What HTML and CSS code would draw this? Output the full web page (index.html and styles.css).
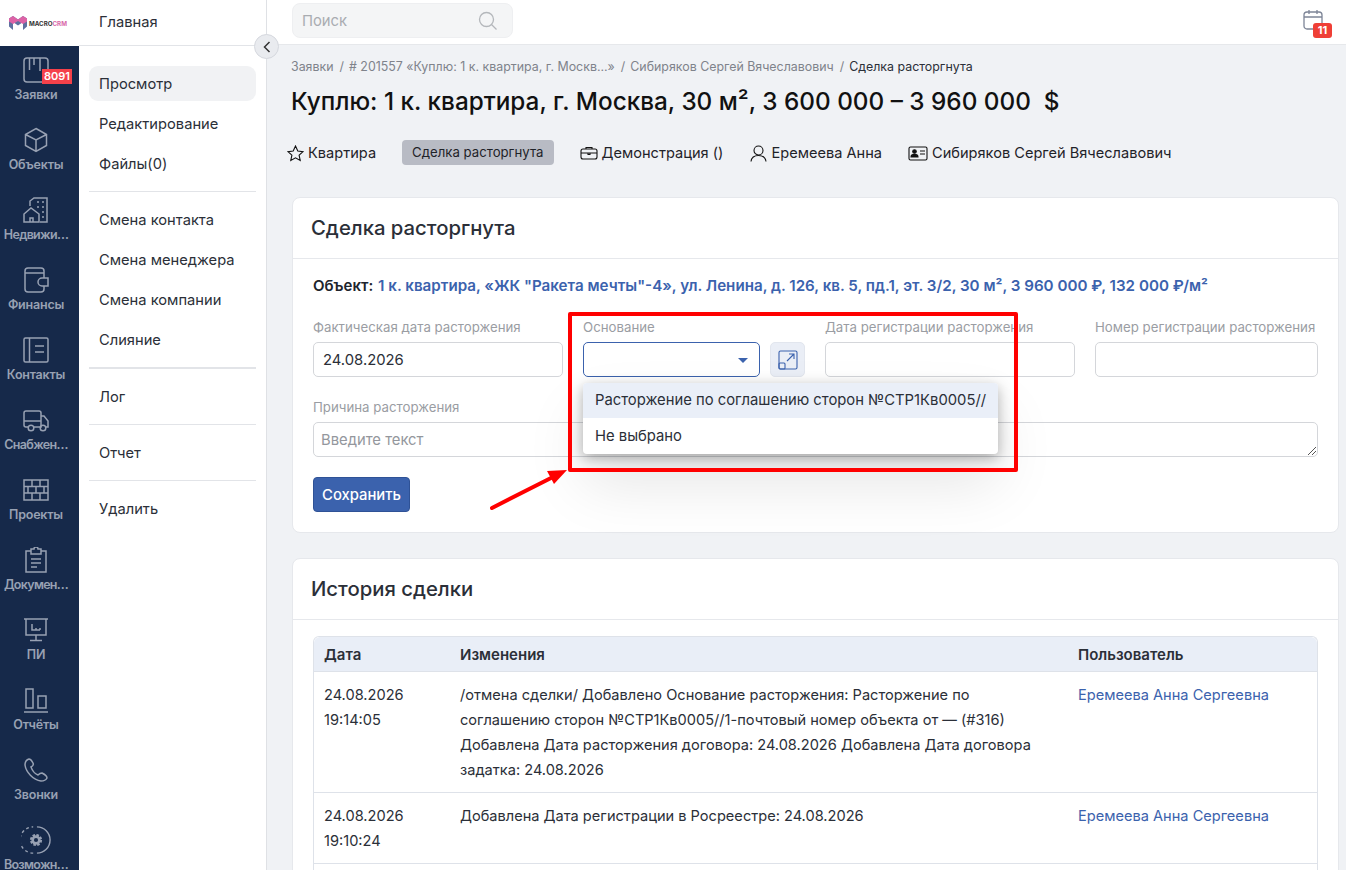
FILE: index.html
```html
<!DOCTYPE html>
<html lang="ru">
<head>
  <meta charset="UTF-8" />
  <title>MacroCRM</title>
  <link rel="stylesheet" href="styles.css">
</head>
<body>
  <div class="app">
    <aside class="rail">
      <div class="logo">
        <svg width="18" height="14" viewBox="0 0 18 14"><path d="M0 2.500L4 0l5 3.500L14 0l4 2.500v8L14 14V6L9 9.500 4 6v8l-4-3.500z" fill="#5f70a0"/><path d="M0 2.500L4 0l5 3.500L14 0l4 2.500v3L14 8 9 5 4 8 0 5.500z" fill="#dd62a6"/></svg>
        <span class="logo-text">MACRO<span class="logo-crm">CRM</span></span>
      </div>
      <a class="rail-item">
        <svg class="rail-icon" viewBox="0 0 26 26"><rect x="1" y="1" width="24" height="24" rx="3"/><path d="M6.500 1v12M11 1v7M17 1v13"/></svg>
        <span>Заявки</span><b class="rail-badge">8091</b>
      </a>
      <a class="rail-item">
        <svg class="rail-icon" viewBox="0 0 26 26"><path d="M13 1.500l10.500 6v11L13 24.500l-10.500-6v-11zM2.500 7.500L13 13l10.500-5.500M13 13v11.500"/></svg>
        <span>Объекты</span>
      </a>
      <a class="rail-item">
        <svg class="rail-icon" viewBox="0 0 26 26"><path d="M7 9V4l4-3h13v24h-7M1 25v-8l7-6 8 6v8zM7 25v-4h3v4M14 5h2M19 5h2M14 10h2M19 10h2M19 15h2M19 20h2"/></svg>
        <span class="rail-cut">Недвижи…</span>
      </a>
      <a class="rail-item">
        <svg class="rail-icon" viewBox="0 0 26 26"><path d="M21 11V4a3 3 0 0 0-3-3H5a3 3 0 0 0-3 3v18a3 3 0 0 0 3 3h13a3 3 0 0 0 3-3v-3M2 6h19"/><path d="M25 11h-6a4 4 0 0 0 0 8h6z"/></svg>
        <span>Финансы</span>
      </a>
      <a class="rail-item">
        <svg class="rail-icon" viewBox="0 0 26 26"><rect x="1" y="1" width="24" height="24" rx="1.500"/><path d="M6.500 1v24M12 9h9M12 15h9"/></svg>
        <span>Контакты</span>
      </a>
      <a class="rail-item">
        <svg class="rail-icon" viewBox="0 0 26 26"><path d="M5 20H3a2 2 0 0 1-2-2V6a2 2 0 0 1 2-2h13a2 2 0 0 1 2 2v14h-7M18 9h3l4 5v6h-2M1 14h17"/><circle cx="8" cy="21" r="2.800"/><circle cx="20" cy="21" r="2.800"/></svg>
        <span class="rail-cut">Снабжен…</span>
      </a>
      <a class="rail-item">
        <svg class="rail-icon" viewBox="0 0 26 26"><path d="M1 3h24v20H1zM1 9.500h24M1 16h24M9 3v6.500M17 3v6.500M5 9.500V16M13 9.500V16M21 9.500V16M9 16v7M17 16v7"/></svg>
        <span>Проекты</span>
      </a>
      <a class="rail-item">
        <svg class="rail-icon" viewBox="0 0 26 26"><path d="M8 4H3v21h20V4h-5M8 2h3a2 2 0 0 1 4 0h3v5H8zM8 12h10M8 16h10M8 20h6"/></svg>
        <span class="rail-cut">Докумен…</span>
      </a>
      <a class="rail-item">
        <svg class="rail-icon" viewBox="0 0 26 26"><path d="M1 2h24M3 2v16h20V2M13 18v5M7 23.500h12M9 7v6h8M13 11v2M17 11v2"/></svg>
        <span>ПИ</span>
      </a>
      <a class="rail-item">
        <svg class="rail-icon" viewBox="0 0 26 26"><path d="M1 25h24M3 2h7v19H3zM15 9h8v12h-8z"/></svg>
        <span>Отчёты</span>
      </a>
      <a class="rail-item">
        <svg class="rail-icon" viewBox="0 0 26 26"><path d="M6 2C3 3 2 5 2 8c1 7 8 15 16 16 3 0 5-1 6-3 0-2-3-4-5-5-2 0-3 1-4 2-3-1-6-5-7-8 2-1 3-2 2-4C9 4 8 2 6 2z"/></svg>
        <span>Звонки</span>
      </a>
      <a class="rail-item">
        <svg class="rail-icon rail-icon-big" viewBox="0 0 32 32"><path d="M17 2a14 14 0 0 1 0 28"/><path d="M13 30A14 14 0 0 1 13 2" stroke-dasharray="3 3"/><circle cx="16" cy="16" r="5" fill="#98a1b3" stroke-width="3" stroke-dasharray="2.500 1.400"/><circle cx="16" cy="16" r="2.200" fill="#16294a" stroke="none"/></svg>
        <span class="rail-cut">Возможн…</span>
      </a>
    </aside>

    <nav class="side">
      <div class="side-top">Главная</div>
      <button class="side-toggle"><svg width="8" height="12" viewBox="0 0 8 12"><path d="M6.500 1L1.500 6l5 5" fill="none" stroke="#333" stroke-width="1.500"/></svg></button>
      <div class="side-list">
        <a class="side-link side-link-active">Просмотр</a>
        <a class="side-link">Редактирование</a>
        <a class="side-link">Файлы(0)</a>
        <hr class="side-sep">
        <a class="side-link">Смена контакта</a>
        <a class="side-link">Смена менеджера</a>
        <a class="side-link">Смена компании</a>
        <a class="side-link">Слияние</a>
        <hr class="side-sep side-sep-thick">
        <a class="side-link">Лог</a>
        <hr class="side-sep">
        <a class="side-link">Отчет</a>
        <hr class="side-sep">
        <a class="side-link">Удалить</a>
      </div>
    </nav>

    <div class="main">
      <header class="topbar">
        <div class="search">
          <span>Поиск</span>
          <svg width="20" height="20" viewBox="0 0 20 20" fill="none" stroke="#b4b7bb" stroke-width="1.300"><circle cx="8.500" cy="8.500" r="7"/><path d="M13.500 13.500l5 5"/></svg>
        </div>
        <div class="cal">
          <svg width="20" height="22" viewBox="0 0 20 22" fill="none" stroke="#7d8597" stroke-width="1.300"><rect x="1" y="3" width="18" height="17" rx="3"/><path d="M1 8h18M6 1v4M14 1v4"/></svg>
          <b class="cal-badge">11</b>
        </div>
      </header>

      <div class="content">
        <div class="crumbs">
          <span>Заявки</span><i>/</i><span># 201557 «Куплю: 1 к. квартира, г. Москв...»</span><i>/</i><span>Сибиряков Сергей Вячеславович</span><i>/</i><span class="crumb-now">Сделка расторгнута</span>
        </div>
        <h1 class="title">Куплю: 1 к. квартира, г. Москва, 30 м², 3 600 000 – 3 960 000 &nbsp;$</h1>

        <div class="chips">
          <span class="chip chip-a">
            <svg width="17" height="17" viewBox="0 0 17 17" fill="none" stroke="#111" stroke-width="1.100"><path d="M8.500 1l2.300 5 5.200.6-3.900 3.600 1.100 5.300-4.700-2.700-4.700 2.700 1.100-5.300L1 6.600 6.200 6z"/></svg>
            Квартира
          </span>
          <span class="chip-status">Сделка расторгнута</span>
          <span class="chip chip-b">
            <svg width="18" height="14" viewBox="0 0 18 14" fill="none" stroke="#111" stroke-width="1.100"><rect x="1" y="3" width="16" height="10" rx="2"/><path d="M6 3V1.500h6V3M1 7h16M8 7v1.500h2V7"/></svg>
            Демонстрация ()
          </span>
          <span class="chip chip-c">
            <svg width="17" height="17" viewBox="0 0 17 17" fill="none" stroke="#111" stroke-width="1.100"><circle cx="8.500" cy="5.500" r="4.500"/><path d="M1 16.500c.5-4 3.500-6 7.500-6s7 2 7.500 6"/></svg>
            Еремеева Анна
          </span>
          <span class="chip chip-d">
            <svg width="20" height="15" viewBox="0 0 20 15" fill="none" stroke="#111" stroke-width="1.100"><rect x="1" y="1" width="18" height="13" rx="1.500"/><circle cx="6.500" cy="5.500" r="1.800" fill="#111"/><path d="M3 11c0-3.500 7-3.500 7 0z" fill="#111"/><path d="M12 5h5M12 8h5"/></svg>
            Сибиряков Сергей Вячеславович
          </span>
        </div>

        <section class="card card-form">
          <h2 class="card-head">Сделка расторгнута</h2>
          <div class="card-body">
            <p class="object"><span class="object-key">Объект:</span> <a>1 к. квартира, «ЖК "Ракета мечты"-4», ул. Ленина, д. 126, кв. 5, пд.1, эт. 3/2, 30 м², 3 960 000 ₽, 132 000 ₽/м²</a></p>
            <div class="fields">
              <label class="field field-date">
                <span class="field-label">Фактическая дата расторжения</span>
                <span class="input input-value">24.08.2026</span>
              </label>
              <div class="field field-basis">
                <span class="field-label">Основание</span>
                <div class="basis-row">
                  <span class="input input-focus"><span class="caret"></span></span>
                  <span class="open-btn">
                    <svg width="20" height="20" viewBox="0 0 20 20" fill="none" stroke="#3b62ad" stroke-width="1.100"><rect x="1" y="1" width="18" height="18" rx="1.500"/><rect x="1" y="13" width="6" height="6" rx="1"/><path d="M9 11l7-7M11 4h5v5"/></svg>
                  </span>
                </div>
                <div class="dropdown">
                  <div class="dropdown-item dropdown-item-hover">Расторжение по соглашению сторон №СТР1Кв0005//</div>
                  <div class="dropdown-item">Не выбрано</div>
                </div>
              </div>
              <label class="field field-date">
                <span class="field-label">Дата регистрации расторжения</span>
                <span class="input"></span>
              </label>
              <label class="field field-num">
                <span class="field-label">Номер регистрации расторжения</span>
                <span class="input"></span>
              </label>
            </div>
            <div class="field">
              <span class="field-label">Причина расторжения</span>
              <span class="input input-area">Введите текст
                <svg class="grip" width="9" height="9" viewBox="0 0 9 9" stroke="#555" stroke-width="1"><path d="M1 9l8-8M5 9l4-4"/></svg>
              </span>
            </div>
            <button class="save">Сохранить</button>
          </div>
        </section>

        <section class="card">
          <h2 class="card-head">История сделки</h2>
          <div class="card-body">
            <div class="history">
              <div class="hist-row hist-head"><span>Дата</span><span>Изменения</span><span>Пользователь</span></div>
              <div class="hist-row">
                <span>24.08.2026<br>19:14:05</span>
                <span class="hist-text">/отмена сделки/ Добавлено Основание расторжения: Расторжение по соглашению сторон №СТР1Кв0005//1-почтовый номер объекта от — (#316) Добавлена Дата расторжения договора: 24.08.2026 Добавлена Дата договора задатка: 24.08.2026</span>
                <a>Еремеева Анна Сергеевна</a>
              </div>
              <div class="hist-row">
                <span>24.08.2026<br>19:10:24</span>
                <span class="hist-text">Добавлена Дата регистрации в Росреестре: 24.08.2026</span>
                <a>Еремеева Анна Сергеевна</a>
              </div>
              <div class="hist-row hist-empty"></div>
            </div>
          </div>
        </section>
      </div>
    </div>
  </div>

  <!-- red marks drawn over the screenshot -->
  <div class="mark-box"></div>
  <svg class="mark-arrow" width="90" height="52" viewBox="0 0 90 52">
    <path d="M3 48L62 18" stroke="#f00" stroke-width="4" stroke-linecap="round"/>
    <path d="M78 10L58 11l7 13z" fill="#f00"/>
  </svg>
</body>
</html>
```
FILE: styles.css
```css
* {
  box-sizing: border-box;
}
html, body {
  margin: 0;
  height: 870px;
  overflow: hidden;
}
body {
  font-family: Inter, "Noto Sans", sans-serif;
  font-size: 14.8px;
  color: #2b2f38;
  background: #f0f2f5;
  position: relative;
}
.app {
  display: flex;
  height: 870px;
}

/* dark rail */
.rail {
  width: 79px;
  flex: none;
  background: #16294a;
  overflow: hidden;
}
.logo {
  height: 46px;
  background: #fff;
  display: flex;
  align-items: center;
  padding-left: 9px;
  gap: 2px;
}
.logo-text {
  font-size: 6.2px;
  font-weight: 700;
  color: #333;
}
.logo-crm {
  color: #d866a8;
}
.rail-item {
  height: 70px;
  display: flex;
  flex-direction: column;
  align-items: center;
  padding: 11px 7px 0 0;
  position: relative;
  color: #98a1b3;
  font-size: 12.500px;
  font-weight: 600;
  white-space: nowrap;
}
.rail-item span {
  margin-top: 4px;
  letter-spacing: -0.2px;
}
.rail-item .rail-cut {
  letter-spacing: -0.7px;
}
.rail-icon {
  width: 26px;
  height: 26px;
  fill: none;
  stroke: #98a1b3;
  stroke-width: 1.500;
}
.rail-icon-big {
  width: 30px;
  height: 30px;
  margin-top: -2px;
  margin-bottom: -2px;
}
.rail-badge {
  position: absolute;
  top: 23px;
  left: 42px;
  width: 30px;
  height: 15px;
  background: #f5414a;
  color: #fff;
  font-size: 11px;
  font-weight: 600;
  line-height: 15px;
  text-align: center;
}

/* second menu */
.side {
  width: 188px;
  flex: none;
  background: #fff;
  border-right: 1px solid #dfe1e5;
  position: relative;
  font-size: 14.7px;
}
.side-top {
  height: 46px;
  padding: 13px 20px 0;
  border-bottom: 1px solid #e2e4e8;
  color: #2b2f38;
}
.side-toggle {
  position: absolute;
  top: 34px;
  right: -13px;
  width: 25px;
  height: 25px;
  padding: 0;
  border-radius: 50%;
  border: 1px solid #d5d8de;
  background: #e9ebef;
  display: flex;
  align-items: center;
  justify-content: center;
}
.side-list {
  padding: 20px 10px 0;
}
.side-link {
  display: block;
  height: 35px;
  line-height: 37px;
  padding: 0 10px;
  margin-bottom: 5px;
  border-radius: 9px;
}
.side-link-active {
  background: #f1f2f4;
}
.side-sep {
  margin: 10px 0;
  border: 0;
  border-top: 1px solid #e2e4e8;
}
.side-sep-thick {
  border-top-width: 2px;
}

/* top bar */
.main {
  flex: 1;
  min-width: 0;
  height: 870px;
  overflow: hidden;
}
.topbar {
  height: 45px;
  background: #fff;
  border-bottom: 1px solid #e6e8eb;
  display: flex;
  justify-content: space-between;
  align-items: flex-start;
  padding: 3px 13px 0 25px;
}
.search {
  width: 221px;
  height: 35px;
  background: #f4f5f6;
  border: 1px solid #eeeff1;
  border-radius: 8px;
  color: #a9acb1;
  display: flex;
  align-items: center;
  justify-content: space-between;
  padding: 0 14px 0 9px;
}
.cal {
  position: relative;
  margin-top: 6px;
  width: 30px;
  height: 32px;
}
.cal-badge {
  position: absolute;
  left: 10px;
  top: 14px;
  width: 19px;
  height: 15px;
  background: #ef3f36;
  border-radius: 3px;
  color: #fff;
  font-size: 11px;
  line-height: 15px;
  text-align: center;
}

/* page */
.content {
  padding: 0 7px 0 25px;
}
.crumbs {
  padding-top: 14px;
  margin-left: -1px;
  height: 29px;
  font-size: 12.400px;
  color: #7f838b;
  display: flex;
  gap: 5px;
}
.crumbs i {
  font-style: normal;
  margin-left: 1px;
}
.crumb-now {
  color: #2b2f38;
}
.title {
  margin: 10px 0 0 -1px;
  font-size: 24.300px;
  line-height: 34px;
  font-weight: 500;
  color: #111;
}
.chips {
  display: flex;
  align-items: center;
  height: 26px;
  margin: 21px 0 0 -5px;
  font-size: 14.6px;
  color: #1f2329;
}
.chip {
  display: flex;
  align-items: center;
  gap: 4px;
  padding-top: 2px;
}
.chip-status {
  background: #b8bbc4;
  border-radius: 4px;
  height: 25px;
  line-height: 25px;
  padding: 0 10px;
  font-size: 13.200px;
  margin: 0 26px 0 26px;
}
.chip-c {
  margin-left: 27px;
  margin-right: 25px;
}
.chip-d {
  margin-left: 1px;
}
.card {
  background: #fff;
  border: 1px solid #e6e8ec;
  border-radius: 8px;
  margin-top: 25px;
}
.card-form {
  margin-top: 32px;
  height: 336px;
}
.card-head {
  margin: 0;
  height: 61px;
  padding: 0 18px;
  line-height: 60px;
  font-size: 20.300px;
  font-weight: 500;
  color: #2b2f38;
  border-bottom: 1px solid #e6e8ec;
}
.card-body {
  padding: 16px 20px 0;
}
.object {
  margin: 0;
  height: 20px;
  line-height: 21px;
  font-size: 15.170px;
  white-space: nowrap;
  font-weight: 600;
}
.object-key {
  font-size: 15px;
  color: #20242c;
}
.object a {
  margin-left: 1px;
}
.object a, .hist-row a {
  color: #3b62ad;
}
.fields {
  display: flex;
  gap: 20px;
  margin-top: 25px;
  margin-bottom: 23px;
}
.field {
  display: block;
}
.field-date {
  width: 250px;
}
.field-num {
  width: 223px;
}
.field-basis {
  width: 222px;
  position: relative;
}
.field-label {
  display: block;
  font-size: 13.250px;
  line-height: 15px;
  color: #9a9da3;
  white-space: nowrap;
}
.input {
  display: block;
  height: 35px;
  line-height: 35px;
  margin-top: 7px;
  padding: 0 7px;
  background: #fff;
  border: 1px solid #d4d6da;
  border-radius: 5px;
  position: relative;
}
.input-value {
  padding-left: 9px;
}
.input-focus {
  border-color: #3b62ad;
  width: 177px;
}
.input-area {
  color: #94979d;
}
.grip {
  position: absolute;
  right: 1px;
  bottom: 1px;
}
.caret {
  position: absolute;
  right: 11px;
  top: 15px;
  border: 5px solid transparent;
  border-top: 5px solid #3b62ad;
  border-bottom: 0;
}
.basis-row {
  display: flex;
  gap: 10px;
}
.open-btn {
  width: 35px;
  height: 35px;
  margin-top: 7px;
  background: #eaeef6;
  border: 1px solid #e2e6ee;
  border-radius: 5px;
  display: flex;
  align-items: center;
  justify-content: center;
}
.dropdown {
  position: absolute;
  top: 63px;
  left: 0;
  width: 415px;
  background: #fff;
  border-radius: 4px;
  overflow: hidden;
  z-index: 2;
  box-shadow: 0 4px 14px rgba(0, 0, 0, 0.3), 0 30px 60px rgba(0, 0, 0, 0.1);
}
.dropdown-item {
  height: 36px;
  line-height: 36px;
  padding: 0 12px;
  white-space: nowrap;
}
.dropdown-item-hover {
  height: 35px;
  line-height: 35px;
  background: #eaeff8;
}
.save {
  display: block;
  margin-top: 20px;
  width: 97px;
  height: 35px;
  background: #3b62ad;
  border: 1px solid #2f5296;
  border-radius: 4px;
  color: #fff;
  font: inherit;
  font-weight: 500;
}
.history {
  border: 1px solid #dee2e9;
  border-radius: 6px 6px 0 0;
  border-bottom: 0;
}
.hist-row {
  display: grid;
  grid-template-columns: 136px 618px 1fr;
  padding: 11px 10px 9px;
  font-size: 14.6px;
  line-height: 25px;
  border-bottom: 1px solid #dee2e9;
}
.hist-text {
  padding-right: 20px;
}
.hist-head {
  background: #e9eef7;
  padding: 5px 10px 4px;
  font-size: 15px;
  font-weight: 600;
  border-radius: 6px 6px 0 0;
}
.hist-empty {
  height: 30px;
}

/* annotation */
.mark-box {
  position: absolute;
  left: 568px;
  top: 312px;
  width: 450px;
  height: 160px;
  border: 4px solid #f00;
  border-radius: 2px;
  z-index: 3;
}
.mark-arrow {
  position: absolute;
  left: 489px;
  top: 460px;
  z-index: 3;
}
```
